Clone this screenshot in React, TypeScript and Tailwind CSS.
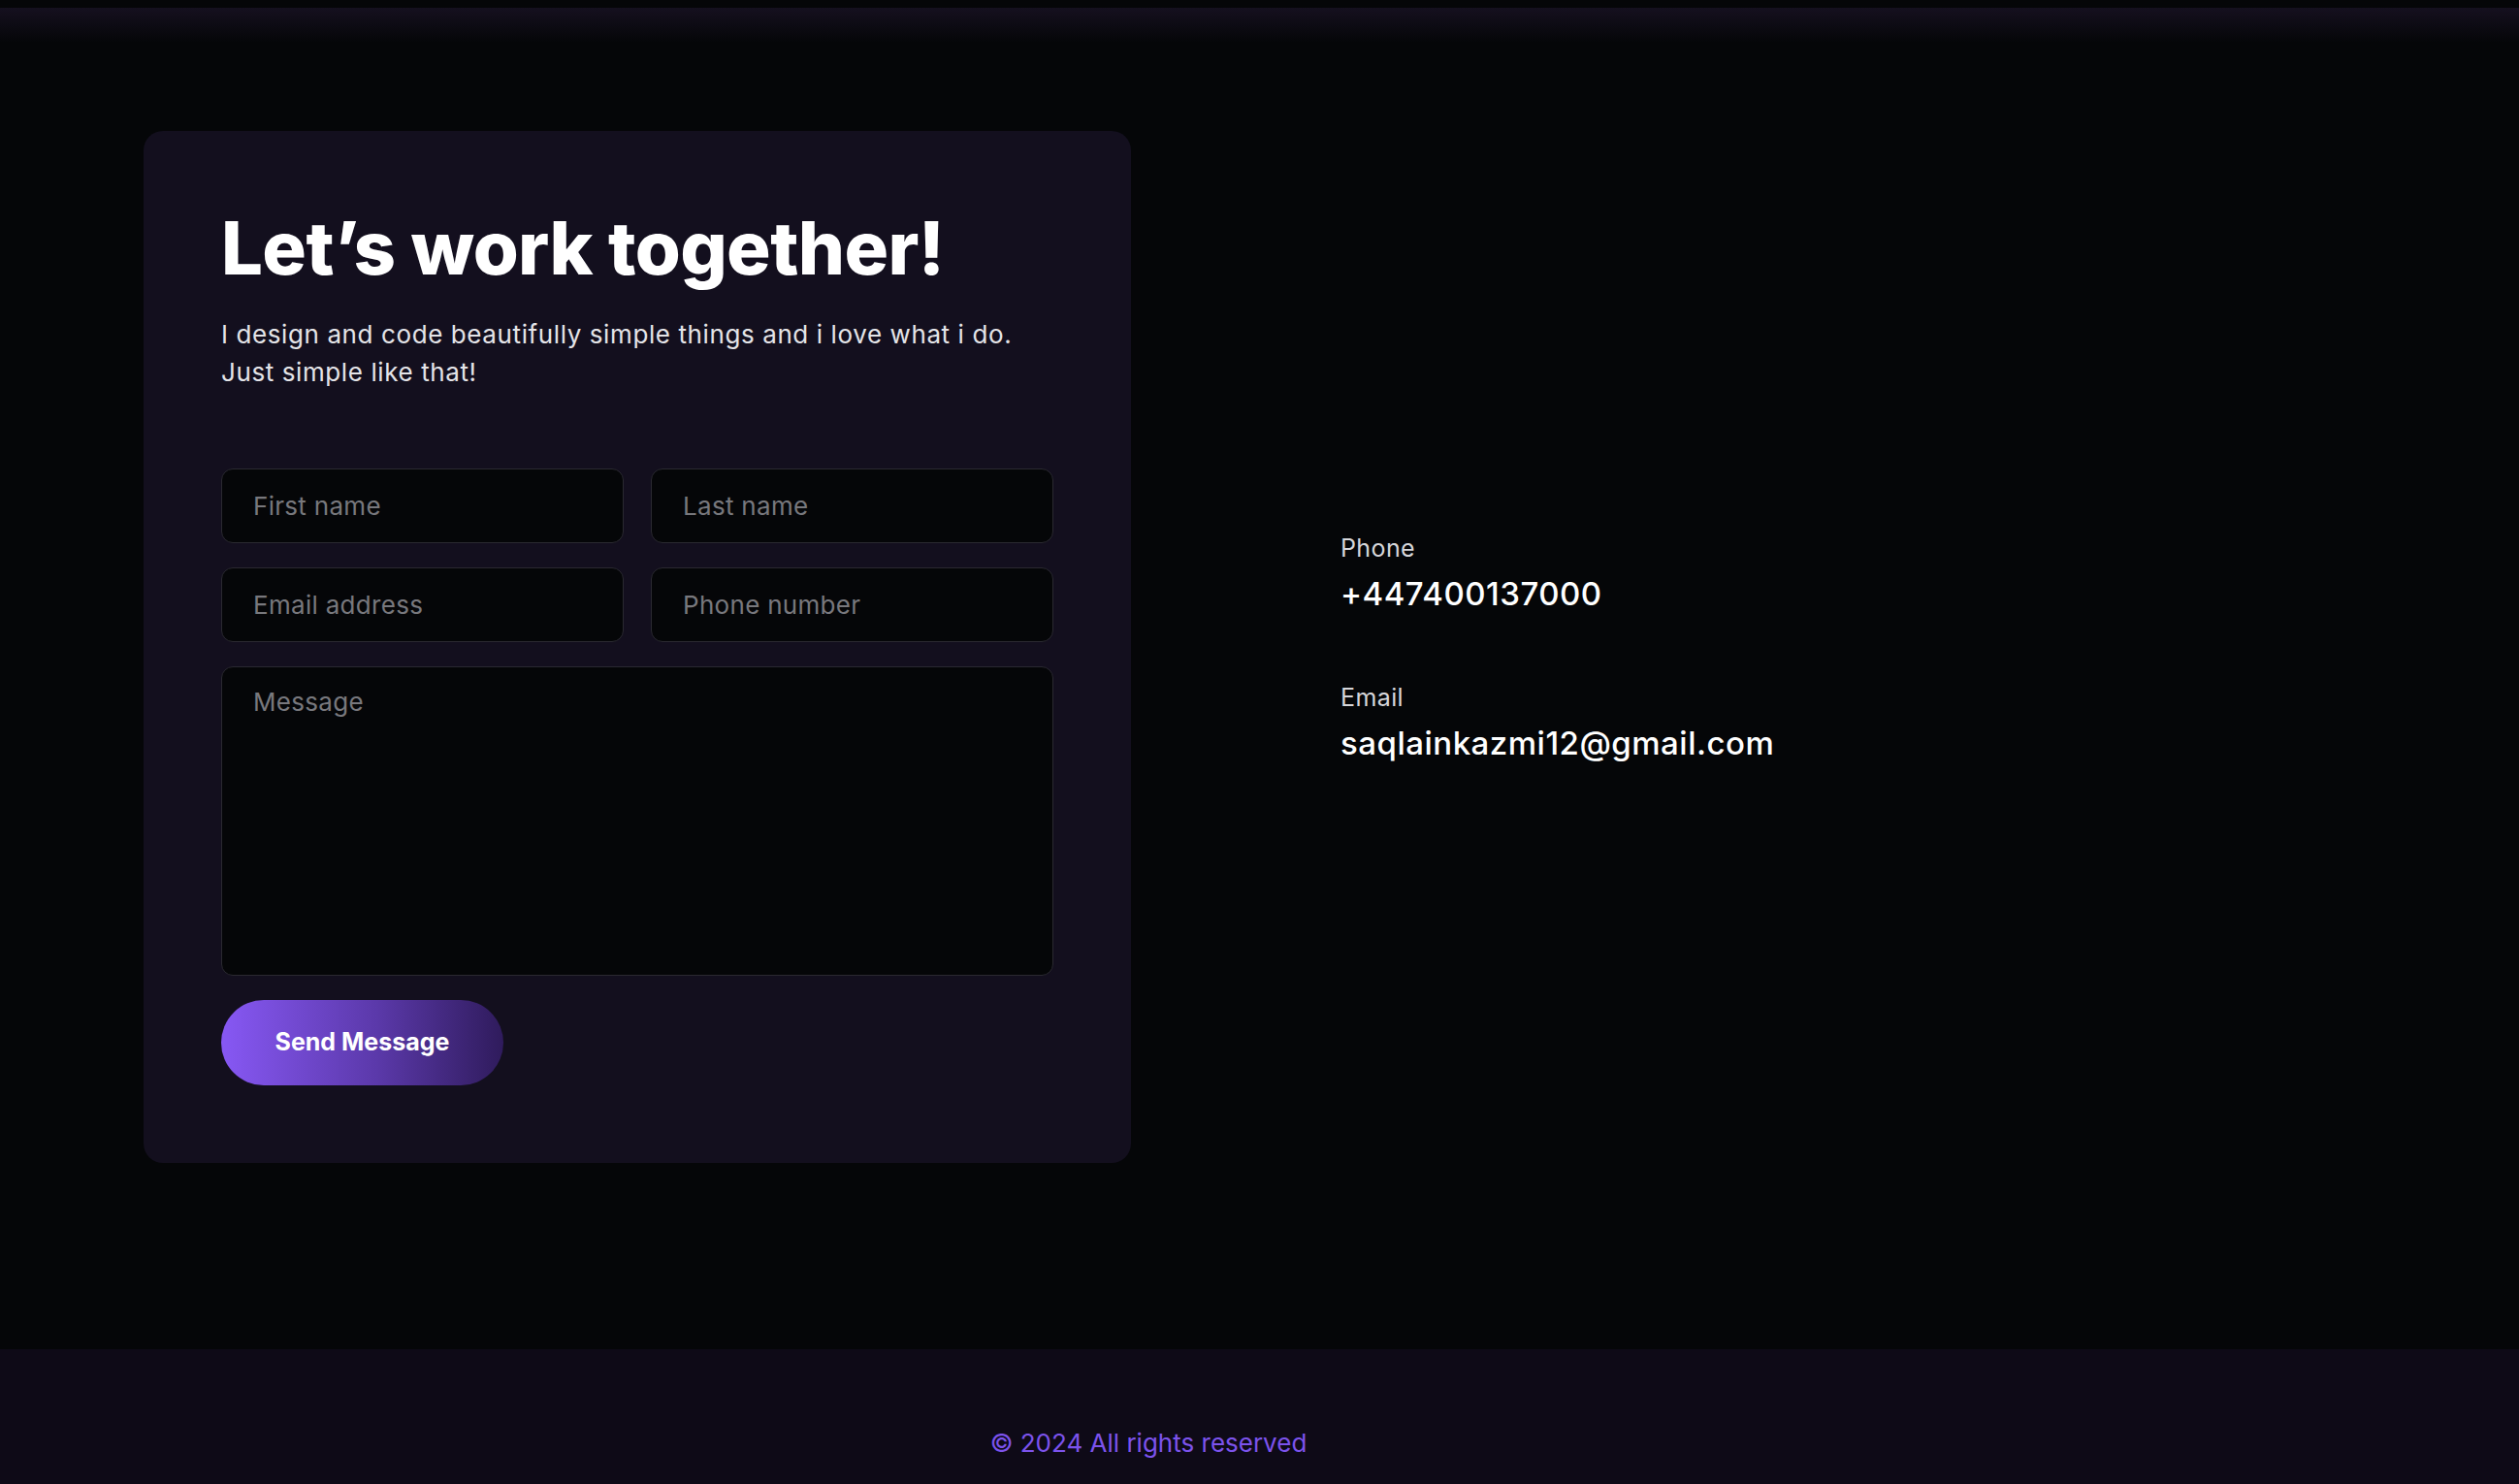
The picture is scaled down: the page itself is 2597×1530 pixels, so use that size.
import { useState } from "react";

const FONT = { fontFamily: "Inter, 'Noto Sans', sans-serif" };

function Field({ placeholder, type = "text" }: { placeholder: string; type?: string }) {
  return (
    <input
      type={type}
      placeholder={placeholder}
      className="h-[77px] w-full rounded-[12px] border border-[#2a2931] bg-[#050608] px-[32px] text-[26px] tracking-[0.3px] text-white outline-none placeholder:text-[#78787d]"
    />
  );
}

function ContactInfo({ label, value }: { label: string; value: string }) {
  return (
    <div className="flex flex-col">
      <span className="text-[25px] leading-[36px] tracking-[0.4px] text-[#d6d6da]">{label}</span>
      <span className="mt-[7px] text-[33px] font-medium leading-[44px] tracking-[0.5px] text-white">{value}</span>
    </div>
  );
}

export default function App() {
  const [message, setMessage] = useState("");

  return (
    <div className="min-h-screen bg-[#050608]" style={FONT}>
      <div className="h-2 bg-[#050608]" />

      <section className="flex items-center bg-[linear-gradient(180deg,#15101f_0px,#050608_36px)] pl-[148px] pt-[127px] pb-[192px]">
        {/* Form card */}
        <div className="w-[1018px] shrink-0 rounded-[20px] bg-[#130f1e] p-[80px]">
          <h1 className="text-[76px] font-extrabold leading-[80px] tracking-[-0.008em] text-white">
            Let’s work together!
          </h1>
          <p className="mt-[30px] text-[26px] leading-[39px] tracking-[0.6px] text-[#e4e4e8]">
            I design and code beautifully simple things and i love what i do.
            <br />
            Just simple like that!
          </p>

          <form className="mt-[80px]" onSubmit={(e) => e.preventDefault()}>
            <div className="grid grid-cols-2 gap-x-[28px] gap-y-[25px]">
              <Field placeholder="First name" />
              <Field placeholder="Last name" />
              <Field placeholder="Email address" type="email" />
              <Field placeholder="Phone number" type="tel" />
            </div>
            <textarea
              value={message}
              onChange={(e) => setMessage(e.target.value)}
              placeholder="Message"
              className="mt-[25px] block h-[319px] w-full resize-none rounded-[12px] border border-[#2a2931] bg-[#050608] px-[32px] pt-[16px] text-[26px] leading-[39px] tracking-[0.3px] text-white outline-none placeholder:text-[#78787d]"
            />
            <button
              type="submit"
              className="mt-[25px] flex h-[88px] w-[291px] items-center justify-center rounded-full bg-[linear-gradient(90deg,#8758f4,#5b39aa_55%,#2f1b5c)] text-[25px] font-bold text-white"
            >
              Send Message
            </button>
          </form>
        </div>

        {/* Contact details */}
        <div className="ml-[216px] flex flex-col gap-[67px]">
          <ContactInfo label="Phone" value="+447400137000" />
          <ContactInfo label="Email" value="saqlainkazmi12@gmail.com" />
        </div>
      </section>

      <footer className="flex justify-center bg-[#0e0a17] pr-[229px] pt-[79px] pb-[80px]">
        <p className="text-[26px] leading-[36px] text-[#7c53ec]">© 2024 All rights reserved</p>
      </footer>
    </div>
  );
}
